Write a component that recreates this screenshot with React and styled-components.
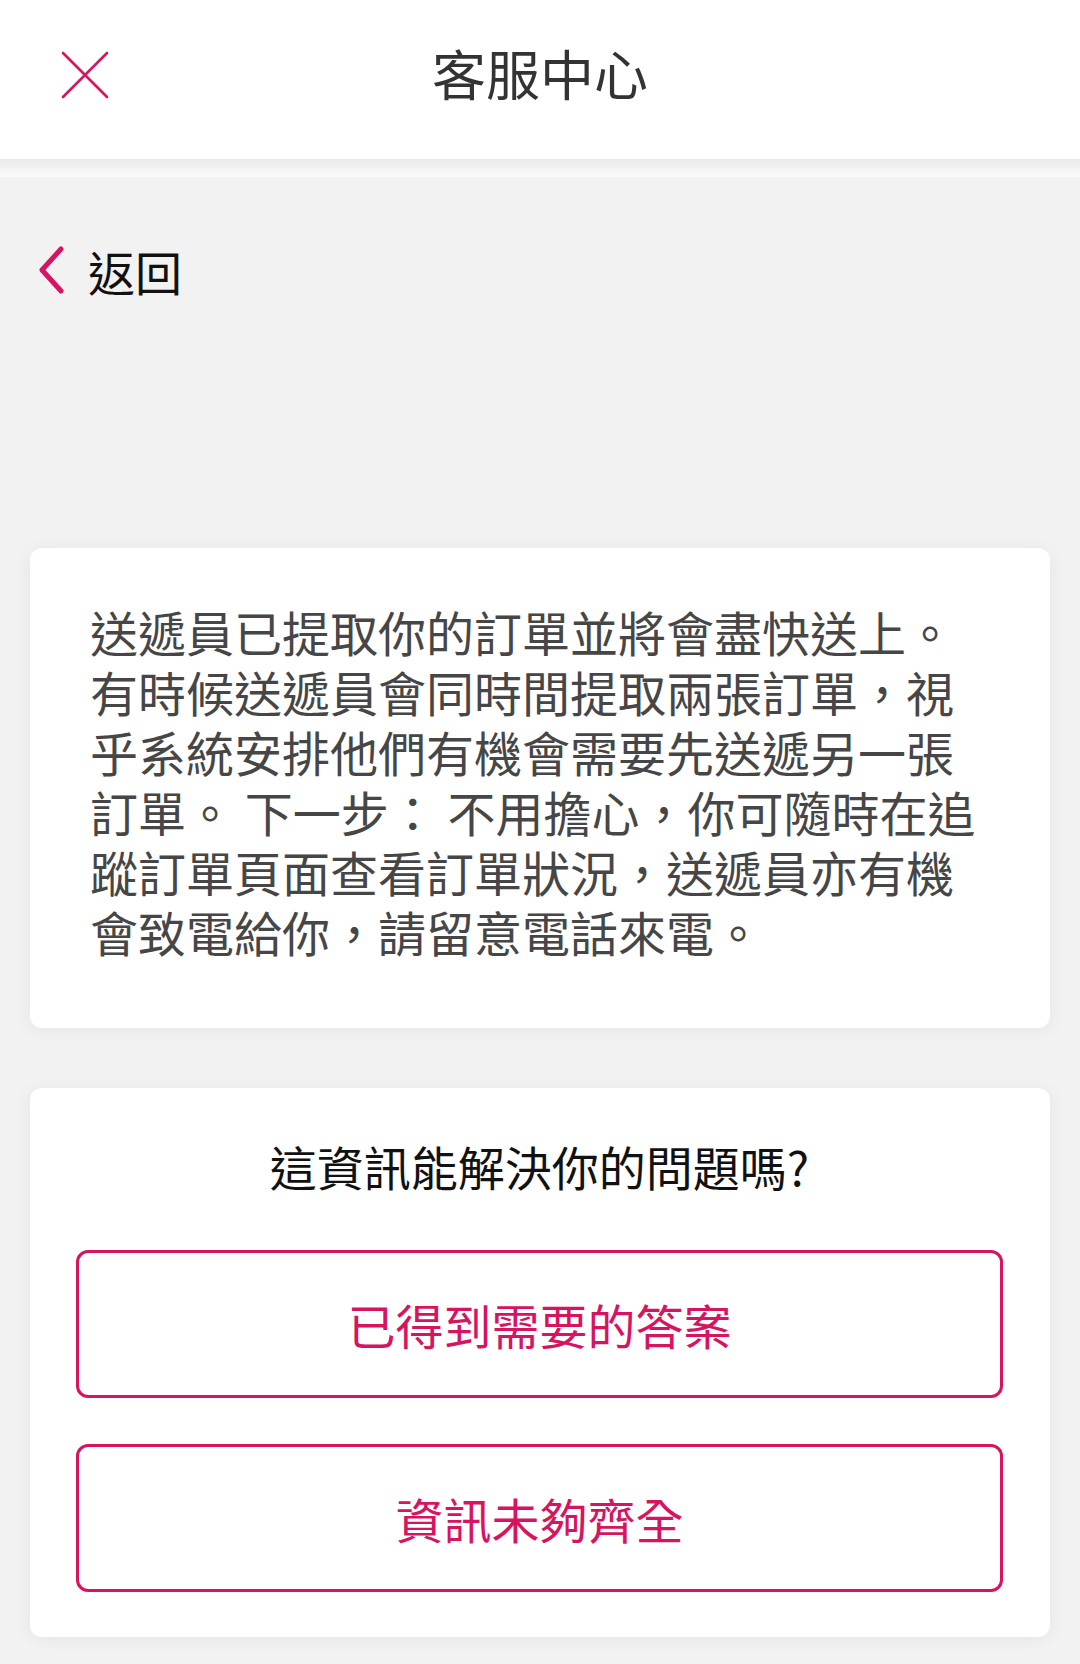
import React from "react";
import styled, { createGlobalStyle } from "styled-components";

const PINK = "#d6145f";

const GlobalStyle = createGlobalStyle`
  body {
    margin: 0;
    background: #f2f2f2;
    font-family: "Noto Sans CJK TC", "Noto Sans", sans-serif;
  }
`;

const Page = styled.div`
  width: 1080px;
  min-height: 1664px;
  background: #f2f2f2;
`;

const Header = styled.header`
  height: 159px;
  background: #fff;
  display: grid;
  grid-template-columns: 1fr auto 1fr;
  align-items: center;
`;

const HeaderShade = styled.div`
  height: 18px;
  background: linear-gradient(#e9e9e9, #fbfbfb);
`;

const CloseButton = styled.button`
  justify-self: start;
  margin: -10px 0 0 61px;
  padding: 0;
  border: none;
  background: none;
  display: flex;
`;

const Title = styled.h1`
  margin: 0 0 14px;
  font-size: 54px;
  font-weight: 400;
  color: #333;
  line-height: 1;
`;

const Main = styled.main`
  padding: 0 30px;
`;

const BackRow = styled.div`
  display: flex;
  align-items: center;
  gap: 24px;
  height: 48px;
  margin-top: 69px;
  padding-left: 8px;
  font-size: 47px;
  color: #111;
`;

const Card = styled.section`
  background: #fff;
  border-radius: 12px;
  box-shadow: 0 2px 18px rgba(0, 0, 0, 0.06);
  margin-top: ${(p) => p.$top}px;
`;

const InfoCard = styled(Card)`
  padding: 53px 60px 67px;
`;

const InfoText = styled.p`
  margin: 0;
  font-size: 48px;
  line-height: 60px;
  color: #464646;
`;

const FeedbackCard = styled(Card)`
  padding: 48px 47px 45px 46px;
  display: flex;
  flex-direction: column;
  gap: 46px;
`;

const Question = styled.div`
  text-align: center;
  font-size: 47px;
  line-height: 60px;
  color: #111;
  margin-bottom: 8px;
`;

const AnswerButton = styled.button`
  height: 148px;
  border: 3px solid ${PINK};
  border-radius: 12px;
  background: #fff;
  color: ${PINK};
  font-family: inherit;
  font-size: 48px;
`;

const CloseIcon = () => (
  <svg width="48" height="48" viewBox="0 0 48 48">
    <path d="M2 2 L46 46 M46 2 L2 46" stroke={PINK} strokeWidth="2.6" strokeLinecap="round" />
  </svg>
);

const ChevronLeft = () => (
  <svg width="26" height="48" viewBox="0 0 26 48">
    <path d="M23 3 L4 24 L23 45" stroke={PINK} strokeWidth="5" fill="none" strokeLinecap="round" strokeLinejoin="round" />
  </svg>
);

export default function App() {
  return (
    <Page>
      <GlobalStyle />
      <Header>
        <CloseButton aria-label="close">
          <CloseIcon />
        </CloseButton>
        <Title>客服中心</Title>
        <span />
      </Header>
      <HeaderShade />
      <Main>
        <BackRow>
          <ChevronLeft />
          <span>返回</span>
        </BackRow>
        <InfoCard $top={254}>
          <InfoText>
            送遞員已提取你的訂單並將會盡快送上。有時候送遞員會同時間提取兩張訂單，視乎系統安排他們有機會需要先送遞另一張訂單。 下一步： 不用擔心，你可隨時在追蹤訂單頁面查看訂單狀況，送遞員亦有機會致電給你，請留意電話來電。
          </InfoText>
        </InfoCard>
        <FeedbackCard $top={60}>
          <Question>這資訊能解決你的問題嗎?</Question>
          <AnswerButton>已得到需要的答案</AnswerButton>
          <AnswerButton>資訊未夠齊全</AnswerButton>
        </FeedbackCard>
      </Main>
    </Page>
  );
}
